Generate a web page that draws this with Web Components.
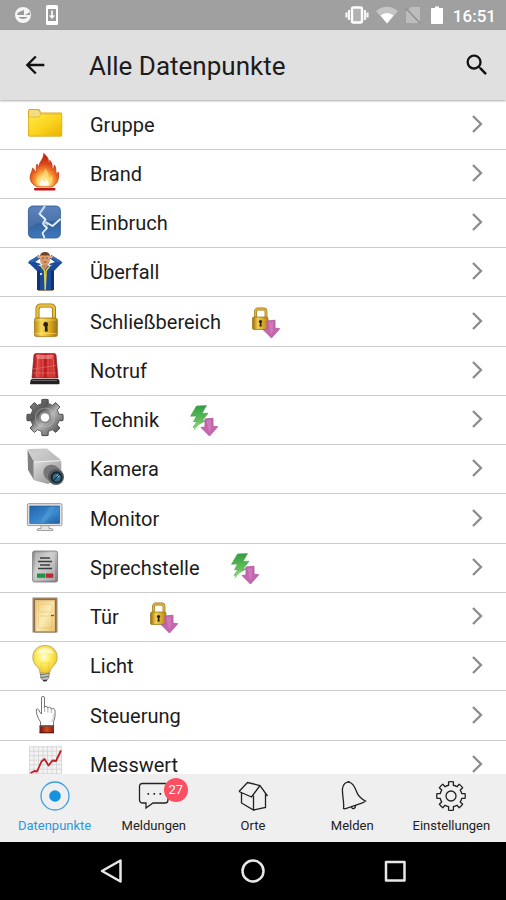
<!DOCTYPE html>
<html lang="de">
<head>
<meta charset="utf-8">
<meta name="viewport" content="width=device-width, initial-scale=1">
<title>Alle Datenpunkte</title>
<style>
  html, body { margin: 0; height: 100%; }
  body { font-family: Roboto, "Liberation Sans", sans-serif; color: #1c1c1c; background: #fff; }
</style>
</head>
<body>
<app-screen>
  <status-bar slot="top" time="16:51"></status-bar>
  <app-header slot="top">Alle Datenpunkte</app-header>
  <point-list>
    <point-row icon="folder">Gruppe</point-row>
    <point-row icon="fire">Brand</point-row>
    <point-row icon="crack">Einbruch</point-row>
    <point-row icon="person">Überfall</point-row>
    <point-row icon="lock" state="lockDown">Schließbereich</point-row>
    <point-row icon="siren">Notruf</point-row>
    <point-row icon="gear" state="boltDown">Technik</point-row>
    <point-row icon="camera">Kamera</point-row>
    <point-row icon="monitor">Monitor</point-row>
    <point-row icon="intercom" state="boltDown">Sprechstelle</point-row>
    <point-row icon="door" state="lockDown">Tür</point-row>
    <point-row icon="bulb">Licht</point-row>
    <point-row icon="hand">Steuerung</point-row>
    <point-row icon="chart">Messwert</point-row>
  </point-list>
  <tab-bar slot="bottom">
    <tab-item icon="target" active>Datenpunkte</tab-item>
    <tab-item icon="chat" badge="27">Meldungen</tab-item>
    <tab-item icon="house">Orte</tab-item>
    <tab-item icon="bell">Melden</tab-item>
    <tab-item icon="cog">Einstellungen</tab-item>
  </tab-bar>
  <system-nav slot="bottom"></system-nav>
</app-screen>

<script>
// Outline of a toothed wheel with n teeth around (cx, cy).
function wheel(cx, cy, n, inner, outer, baseW, tipW) {
  const step = Math.PI * 2 / n;
  const at = (r, a) => (cx + r * Math.sin(a)).toFixed(2) + ' ' + (cy - r * Math.cos(a)).toFixed(2);
  let d = '';
  for (let i = 0; i < n; i++) {
    const a = i * step;
    d += (i ? `A${inner} ${inner} 0 0 1 ` : 'M') + at(inner, a - step * baseW);
    d += 'L' + at(outer, a - step * tipW) + `A${outer} ${outer} 0 0 1 ` + at(outer, a + step * tipW);
    d += 'L' + at(inner, a + step * baseW);
  }
  return d + `A${inner} ${inner} 0 0 1 ` + at(inner, -step * baseW) + 'Z';
}

// Colour pictures on a 40 x 40 canvas.
const pictures = {
  folder: `<defs><linearGradient id="g" x1="0" y1="0" x2="1" y2="1"><stop offset="0" stop-color="#ffe94a"/><stop offset=".5" stop-color="#fbd520"/><stop offset="1" stop-color="#e9b200"/></linearGradient></defs>
    <path d="M3 6q0-2 2-2h8q2 0 2.500 2l.5 1.500h20q1 0 1 1V30q0 1.500-1.500 1.500h-31Q3 31.500 3 30z" fill="#d9a820"/>
    <path d="M4 6.200Q4 5 5.500 5h7q1.500 0 2 1.500l.5 2h20.500V13H4z" fill="#f3dc83"/>
    <path d="M3.500 13q0-1 1-1H14l2.500-3H36q.800 0 .800.800V30q0 1-1 1h-31q-1 0-1-1z" fill="url(#g)" stroke="#e3b719" stroke-width=".8"/>`,
  fire: `<defs><radialGradient id="g" cx=".5" cy=".85" r=".85"><stop offset="0" stop-color="#fffbe0"/><stop offset=".22" stop-color="#ffd968"/><stop offset=".42" stop-color="#f58a2c"/><stop offset=".65" stop-color="#dc4419"/><stop offset="1" stop-color="#ad1c0a"/></radialGradient></defs>
    <path d="M13 33C7 31 4 26 5.500 21c.6-2.500 2-4 2-7 1.800 1.300 2.600 3 2.700 5 2.300-2.500 0-5.500 1.800-9 .5 1.400 1 2 1.800 2.600C14.500 7 19 5 18.700-.5 22 2 24 5 23.500 9c1-.5 1.400-1.500 1.400-2.700 2.600 3.200 2.600 6.200 2 9.700 1.200-.8 2.200-2.500 2.600-5 2 3 .6 5.500 2 8.500 1 1.200 1.500-.5 1.700-1.500 1.300 5.500-.2 12-6.700 15z" fill="url(#g)" stroke="#c23c14" stroke-width=".8"/>
    <path d="M13 31c-3-4-1-7 1-10 .5 1.500 1 2 2 3 1-4 4-6 4-10 4 4 3 7 4 11 1.500-1 2-2.500 2-4 3 4 2 7-1 10z" fill="#ffdf80" opacity=".6"/>
    <path d="M15 31.500c-1-3 1-4 2-6l2.500 3 2-3.500c1 2 3 4 2 6.500z" fill="#fff" opacity=".85"/>
    <rect x="9" y="34" width="21.500" height="2.400" rx=".8" fill="#bf1717"/>`,
  crack: `<defs><linearGradient id="g" x1="0" y1="0" x2="0" y2="1"><stop offset="0" stop-color="#4a76b4"/><stop offset=".55" stop-color="#36629f"/><stop offset="1" stop-color="#3e78bd"/></linearGradient></defs>
    <rect x="3.400" y="3" width="32" height="32" rx="4.500" fill="url(#g)" stroke="#2c5590" stroke-width=".8"/>
    <path d="M4 8q0-4.500 4-4.500h23q4 0 4 4.500v10Q22 16 4 24z" fill="#fff" opacity=".1"/>
    <path d="M20 3l-5.500 8 6 5.500-3 4.500M20.500 19l7 4 8-7M18 21l4 4-4.500 5 2 5" fill="none" stroke="#e9f3fb" stroke-width="1.800" stroke-linejoin="round"/>
    <path d="M17.500 21l3.500-1.500 1.500 3M14 11l5.500-8" fill="none" stroke="#b8d2ec" stroke-width="1.500"/>`,
  person: `<path d="M14 13.500L3.300 11.500 4 9l10-5.500 2 2.500-6 4 6 2zM25.500 13.500l11.200-2L36 9 26 3.500 24 6l6 4-6 2z" fill="#1f4f9d"/>
    <path d="M3.300 10.500L12 19v19h17V19l8.300-8.500L34 8l-8 6H14L7 8z" fill="#1b4c9c"/>
    <path d="M4 9.500L13.500 3l1.500 2-8 5.500zM36.500 9.500L26.500 3 25 5l8 5.500z" fill="#3368b4"/>
    <path d="M12 19v19h3V18zM26 18v20h3V19z" fill="#12336f"/>
    <ellipse cx="20" cy="7.500" rx="5" ry="6.500" fill="#d79b6e"/><path d="M15 5q0-5 5-5t5 5l-2-1.500h-6z" fill="#6f4226"/>
    <path d="M12 4l6-.500 1 1.700-6 1.300zM28 4l-6-.500-1 1.700 6 1.300z" fill="#e0a77b"/><path d="M17 6h2m2 0h2m-4.500 4h3" stroke="#7b4a31" stroke-width=".9"/>
    <path d="M16 13l4 5 4-5" fill="#c58860"/><path d="M15.500 13.500l4 5 .7 19.500 1-19.500 4-5" fill="none" stroke="#e4d43f" stroke-width="1.300"/><rect x="15" y="21" width="2" height="2" fill="#cfe1f5"/>
    <path d="M13 38.400h15" stroke="#4f3f20" stroke-width=".7"/>`,
  lock: `<defs><linearGradient id="g"><stop offset="0" stop-color="#b88910"/><stop offset=".3" stop-color="#f6d75c"/><stop offset=".65" stop-color="#e0ae20"/><stop offset="1" stop-color="#9f7210"/></linearGradient></defs>
    <path d="M12.500 17V7q0-3.500 3.500-3.500h9.500q3.500 0 3.500 3.500v10" fill="none" stroke="#9a740f" stroke-width="4"/>
    <path d="M12.500 17V7q0-3.500 3.500-3.500h9.500q3.500 0 3.500 3.500v10" fill="none" stroke="#e8c141" stroke-width="2.400"/>
    <rect x="9.400" y="16" width="23" height="18.600" rx="2" fill="url(#g)" stroke="#a07b18" stroke-width=".8"/><path d="M10 18h21.500M10 31.500h21.500" stroke="#fff1a0" stroke-width=".8" opacity=".6"/>
    <circle cx="20.700" cy="22.500" r="2.400" fill="#2b2008"/><path d="M20 23h2.200l.6 6.500h-3z" fill="#2b2008"/>`,
  siren: `<defs><linearGradient id="g"><stop offset="0" stop-color="#8f1218"/><stop offset=".25" stop-color="#e04444"/><stop offset=".5" stop-color="#b51a1f"/><stop offset=".75" stop-color="#dc3b3a"/><stop offset="1" stop-color="#84131a"/></linearGradient></defs>
    <path d="M9 4q.3-1.500 2-1.500h18q1.700 0 2 1.500l2 23H7z" fill="url(#g)" stroke="#8b262c" stroke-width=".7"/>
    <path d="M13 4l-1.500 22M18 4v22M23 4v22M28 4l1.500 22" stroke="#ff9380" stroke-width=".8" opacity=".65"/><path d="M8 18l23-3.500M8 22h23" stroke="#f17d61" stroke-width="1" opacity=".55"/>
    <path d="M11 4h17l-1 4H12z" fill="#ffc2b8" opacity=".45"/><path d="M5.500 30q0-2 2-2h25q2 0 2 2v2.500q0 .8-.8.800H5.800q-.8 0-.8-.8z" fill="#242021"/><path d="M7 29.500h25" stroke="#777" stroke-width=".8"/>`,
  gear: `<defs><linearGradient id="g" x1="0" y1="0" x2="1" y2="1"><stop offset="0" stop-color="#909090"/><stop offset=".35" stop-color="#555"/><stop offset=".55" stop-color="#b5b5b5"/><stop offset="1" stop-color="#333"/></linearGradient></defs>
    <path d="${wheel(20, 17.5, 8, 14.2, 18.2, .3, .22)}" fill="url(#g)" stroke="#444" stroke-width=".9" stroke-linejoin="round"/>
    <circle cx="20" cy="17.500" r="9.500" fill="none" stroke="#d0d0d0" stroke-width="1.200" opacity=".4"/><circle cx="20" cy="17.500" r="6" fill="#8a8a8a"/><circle cx="20" cy="17.500" r="4.600" fill="#fff" stroke="#6e6e6e" stroke-width=".6"/>`,
  camera: `<defs><linearGradient id="g" x1="0" y1="0" x2="1" y2="1"><stop offset="0" stop-color="#dedede"/><stop offset="1" stop-color="#8b8b8b"/></linearGradient></defs>
    <path d="M2.500 1L9 12.500V31L3 21z" fill="#808080"/><path d="M2.500 1Q3 0 4.500 0L22-.500 36 11 9 12.500z" fill="#c9c9c9"/>
    <path d="M3 1l6 11.500V31L20 34l16-7V11.500L24 2 8 4z" fill="url(#g)" opacity=".55"/>
    <path d="M8.500 13L35 11.500q1.300 0 1.300 1.500v15L23 35 10 31.500q-1.500-.5-1.500-2z" fill="url(#g)"/><path d="M9 13l26.500-1.300" stroke="#f2f2f2" stroke-width=".9"/>
    <ellipse cx="27" cy="24" rx="9" ry="8" fill="#777" transform="rotate(30 27 24)"/><circle cx="31" cy="28" r="8" fill="#555b5f"/><circle cx="31.500" cy="28.300" r="6" fill="#20282d"/><circle cx="31.800" cy="28.500" r="4" fill="#326b88"/><circle cx="33" cy="27" r="1.500" fill="#93c7dd"/><path d="M28 32l7-7" stroke="#101518" stroke-width="1"/>`,
  monitor: `<defs><linearGradient id="g" x1="0" y1="0" x2="1" y2="1"><stop offset="0" stop-color="#2163ae"/><stop offset=".6" stop-color="#3b8bd0"/><stop offset="1" stop-color="#215f9f"/></linearGradient></defs>
    <path d="M16 26h8v3.500h2.500q1.500 0 1.500 2H12q0-2 1.500-2H16z" fill="#e4e4e4" stroke="#8d8d8d" stroke-width=".8"/>
    <rect x="2.400" y="4.600" width="34.600" height="22" rx="1.500" fill="#e0e0e0" stroke="#949494" stroke-width=".9"/><rect x="4.800" y="7" width="29.800" height="17.400" fill="url(#g)" stroke="#245488" stroke-width=".6"/>
    <path d="M15 24L24.500 7.500h6L20 24z" fill="#8cc6ef" opacity=".2"/>`,
  intercom: `<defs><linearGradient id="g" x1="0" y1="0" x2="1" y2="1"><stop offset="0" stop-color="#858585"/><stop offset=".4" stop-color="#c9c9c9"/><stop offset="1" stop-color="#7c7c7c"/></linearGradient></defs>
    <rect x="7.600" y="3" width="25" height="31" rx="1.800" fill="url(#g)" stroke="#777" stroke-width=".8"/><rect x="10" y="4.500" width="20" height="28" fill="#ddd" opacity=".4"/>
    <path d="M15 10h10M13 13.500h14M15 17h10M13 20.500h14" stroke="#3c3c3c" stroke-width="1.500"/><rect x="12" y="25.500" width="8" height="4.300" fill="#219347"/><rect x="20.700" y="25.500" width="7.600" height="4.300" fill="#bf2732"/>`,
  door: `<defs><linearGradient id="g" x1="0" y1="0" x2="1" y2="1"><stop offset="0" stop-color="#f1cf7e"/><stop offset=".5" stop-color="#fbecb5"/><stop offset="1" stop-color="#eac36d"/></linearGradient></defs>
    <path d="M7.500.500h25V35.500h-25z" fill="#a08263"/><path d="M9.500 2.500h21V35h-21z" fill="#e6c27d" stroke="#7d6046" stroke-width=".8"/><path d="M11.500 4.500H29V34H11.500z" fill="url(#g)"/>
    <path d="M13.500 7H27v8H13.500zM13.500 19H27v12H13.500z" fill="none" stroke="#d9aa55" stroke-width=".8" opacity=".45"/><path d="M26 18.500h3" stroke="#7a5725" stroke-width="1.400"/>`,
  bulb: `<defs><radialGradient id="g" cx=".45" cy=".4" r=".6"><stop offset="0" stop-color="#fffde2"/><stop offset=".4" stop-color="#fff16b"/><stop offset="1" stop-color="#f0c722"/></radialGradient></defs>
    <path d="M15 25.500h9.500l-.7 6q-.6 2-2.500 3-1.500 1.200-3 0-2-1-2.500-3z" fill="#c5c5c5" stroke="#777" stroke-width=".8"/><path d="M15.500 28.500l8.500-1M15.800 31.500l8-1" stroke="#666" stroke-width="1"/><path d="M18 34.500h4" stroke="#333" stroke-width="1.500"/>
    <path d="M15 26.500c0-6-7.200-7-7.200-15C7.800 4 13.300-.5 20-.5s12.200 4.500 12.200 12c0 8-7.200 9-7.200 15q-5 1.500-10 0z" fill="url(#g)" stroke="#b9a660" stroke-width=".9"/>
    <path d="M11 8q2-6 9-6t9 6q-9-3-18 0z" fill="#fff" opacity=".6"/><path d="M17 25l-1-9 2.500 2 1.500-2 1.500 2 2.500-2-1 9" fill="none" stroke="#d9a72b" stroke-width=".7" opacity=".4"/>`,
  hand: `<defs><linearGradient id="g"><stop offset="0" stop-color="#70150c"/><stop offset=".5" stop-color="#d84823"/><stop offset="1" stop-color="#8c1e0e"/></linearGradient></defs>
    <path d="M16.500 18V2q0-1.700 1.400-1.700T19.500 2v9.500q.3-1.400 1.700-1.200 1.500.2 1.600 1.700.6-1 1.900-.8 1.400.3 1.500 1.800.8-.8 2-.5 1.800.6 1.900 2.500.6 6-1.600 11v4H15.500v-4q-2-3-3.500-7l-.8-5q.2-1.500 1.500-1 1.500.7 2 3z" fill="#fff" stroke="#666" stroke-width=".9" stroke-linejoin="round"/>
    <path d="M19.600 11v5M22.900 12v4.500M26.300 13v4" stroke="#888" stroke-width=".7"/><path d="M28.500 18q.3 5-2 8" fill="none" stroke="#ccc"/>
    <path d="M14.500 30.500h14.500v6.500H14.500z" fill="url(#g)"/><path d="M14.300 30h14.900M14.500 36.800h14.500" stroke="#4a100a" stroke-width="1"/>`,
  chart: `<rect x="4.300" y="1.500" width="32.400" height="32.500" fill="#f3f3f3"/><path d="M4.500 1.500V34M9 1.500V34M13.500 1.500V34M18 1.500V34M22.500 1.500V34M27 1.500V34M31.500 1.500V34M36.500 1.500V34M4.300 1.700h32.400M4.300 6.200h32.400M4.300 10.700h32.400M4.300 15.200h32.400M4.300 19.700h32.400M4.300 24.200h32.400M4.300 28.700h32.400" stroke="#d2d2d2" stroke-width=".8"/>
    <path d="M5.500 28l4-2 2.500.5 4.500-10 3-2.500 4 6.500 4-5 3.500.5L36 5.500" fill="none" stroke="#bd1f2a" stroke-width="1.800" stroke-linejoin="round"/>`
};

// Small state pictures on a 28 x 32 canvas; both carry the download arrow.
const arrow = `<path d="M15 15l8-.800v8l4.700.5L19.500 32l-8.500-8.500 4-.5z" fill="#c766ae" stroke="#a9559a" stroke-width=".8" stroke-linejoin="round"/><path d="M16.500 16.500l4.500-.5v9l-2 3.500z" fill="#dc93cb" opacity=".4"/>`;
const states = {
  lockDown: `<defs><linearGradient id="s"><stop offset="0" stop-color="#9a6e0c"/><stop offset=".35" stop-color="#f3cf50"/><stop offset="1" stop-color="#b88416"/></linearGradient></defs>
    <path d="M3.500 12V5.500Q3.500 3 6 3h5.500Q14 3 14 5.500V12" fill="none" stroke="#9b7513" stroke-width="2.800"/><path d="M3.500 12V5.500Q3.500 3 6 3h5.500Q14 3 14 5.500V12" fill="none" stroke="#dfb742" stroke-width="1.500"/>
    <rect x=".5" y="11" width="15.500" height="12.500" rx="1.500" fill="url(#s)" stroke="#98710f" stroke-width=".7"/><circle cx="8.500" cy="15.500" r="1.600" fill="#2b2008"/><path d="M8 15.500h1.200l.5 5H7.500z" fill="#2b2008"/>${arrow}`,
  boltDown: `<defs><linearGradient id="s" x1="0" y1="0" x2="0" y2="1"><stop offset="0" stop-color="#2f9d41"/><stop offset="1" stop-color="#7ccf68"/></linearGradient></defs>
    <path d="M6.500 2L16.500 1.500 12 9.500l6-.3-6 7.800 3.500-.3L3 23.500l4-6-3.500.3L6.500 12 .500 12.200z" fill="url(#s)" stroke="#43a04a" stroke-width=".6" stroke-linejoin="round"/><path d="M5.500 19l-2 8 7-9z" fill="#7ccf68"/>${arrow}`
};

// Line drawings for the tab bar on a 30 x 30 canvas.
const tabs = {
  target: `<circle cx="15" cy="15" r="14" stroke="#3ba0e0"/><circle cx="15" cy="15" r="5.800" fill="#1592e0" stroke="none"/>`,
  chat: `<path d="M3.500 2.500H26Q29 2.500 29 5.500V19Q29 22 26 22H14L7 27V22H4Q.500 22 .500 19V5.500Q.500 2.500 3.500 2.500z"/><path d="M8.500 12.800h1.600M14.500 12.800h1.600M20.500 12.800h1.600" stroke-width="1.700"/>`,
  house: `<path d="M1 10.500L9.500 1.500 22 4.500 29.500 15M1 10.500L13.500 16 22 4.500M3.500 12V22L15.500 29V14.500M15.500 29L27.500 26.500V12.500"/>`,
  bell: `<path d="M6.500 27.500C7.500 22 5 14 5.500 7.500 6 3 9 .8 12 1.200c3.500.6 5.500 4 7.500 9.300 1.500 4.500 4 7 9 9.500L25.500 21.800 8 27.800zM14.500 26c.8 2.800 4.200 1.700 4-1.200"/><path d="M10.500 1.500q.5-1.500 2-.4" />`,
  cog: `<path d="${wheel(15, 15, 8, 11, 14.3, .27, .22)}" stroke-linejoin="round"/><circle cx="15" cy="15" r="5"/>`
};

function define(name, render) {
  customElements.define(name, class extends HTMLElement {
    constructor() {
      super();
      const root = this.attachShadow({ mode: 'open' });
      const tpl = document.createElement('template');
      tpl.innerHTML = render(this);
      root.append(tpl.content.cloneNode(true));
    }
  });
}

define('app-screen', () => `
  <style>
    :host { display: flex; flex-direction: column; height: 100vh; }
    main { flex: 1; min-height: 0; overflow-y: auto; scrollbar-width: none; }
    .top { position: relative; }
  </style>
  <div class="top"><slot name="top"></slot></div>
  <main><slot></slot></main>
  <div><slot name="bottom"></slot></div>`);

define('status-bar', el => `
  <style>
    :host { display: flex; align-items: center; justify-content: space-between; height: 30px; padding: 0 10px 0 14px; background: #a0a0a0; color: #fff; }
    div { display: flex; align-items: center; gap: 7px; }
    .left { gap: 13px; }
    time { font-size: 17px; line-height: 30px; font-weight: 500; padding-top: 2px; }
    svg { display: block; }
  </style>
  <div class="left">
    <svg width="18" height="20" viewBox="0 0 18 20"><circle cx="9" cy="10" r="8" fill="#f5f5f5"/><path d="M4 7.500L10 5v5H3zM11 10l5-3v3zM4.500 12h9q-1.500 2-4.500 2t-4.500-2z" fill="#999"/></svg>
    <svg width="14" height="20" viewBox="0 0 14 20"><rect x="1" y="0" width="12" height="20" rx="1.500" fill="#fff"/><path d="M3 4h8v12H3z" fill="#999"/><path d="M6.200 5.500h1.600v5h2.400L7 14 3.800 10.500h2.400z" fill="#fff"/></svg>
  </div>
  <div>
    <svg width="24" height="20" viewBox="0 0 24 20"><rect x="7" y="2.500" width="10" height="15" rx="1.500" fill="#b2b2b2" stroke="#fff" stroke-width="2.400"/><path d="M4 5v10M20 5v10M1.500 7.500v5M22.500 7.500v5" stroke="#f4f4f4" stroke-width="2.200"/></svg>
    <svg width="22" height="20" viewBox="0 0 22 20"><path d="M0 6Q11-2.500 22 6L11 18.500z" fill="#c5c5c5"/><path d="M4.500 10.500q6.500-5 13 0L11 18.500z" fill="#fff"/></svg>
    <svg width="16" height="20" viewBox="0 0 16 20"><path d="M6 2h9v16H1V7z" fill="#bcbcbc"/><path d="M0 2.500l15.500 16" stroke="#8f8f8f" stroke-width="1.500"/></svg>
    <svg width="18" height="20" viewBox="0 0 18 20"><path d="M4 3h3V1.500h4V3h3q1 0 1 1v14q0 1-1 1H4q-1 0-1-1V4q0-1 1-1z" fill="#fff"/></svg>
    <time>${el.getAttribute('time')}</time>
  </div>`);

define('app-header', () => `
  <style>
    :host { display: block; background: #e0e0e0; box-shadow: 0 1px 2px #0005; }
    header { display: flex; align-items: center; height: 70px; padding: 0 15px 0 21px; }
    h1 { flex: 1; margin: 0 0 0 40px; padding-top: 2px; font-size: 26px; line-height: 32px; font-weight: 400; color: #1c1c1c; }
    button { display: block; padding: 0; border: 0; background: none; }
    svg { display: block; fill: #111; }
  </style>
  <header>
    <button aria-label="Zurück"><svg width="28" height="28" viewBox="0 0 24 24"><path d="M20 11H7.830l5.590-5.590L12 4l-8 8 8 8 1.410-1.410L7.830 13H20z"/></svg></button>
    <h1><slot></slot></h1>
    <button aria-label="Suchen"><svg width="28" height="28" viewBox="0 0 24 24"><path d="M15.500 14h-.79l-.28-.27A6.470 6.470 0 0 0 16 9.500 6.500 6.500 0 1 0 9.500 16c1.610 0 3.090-.59 4.230-1.570l.27.28v.79l5 4.990L20.490 19zm-6 0C7.010 14 5 11.990 5 9.500S7.010 5 9.500 5 14 7.010 14 9.500 11.990 14 9.500 14z"/></svg></button>
  </header>`);

define('point-list', () => `
  <style>
    :host { display: grid; grid-auto-rows: 50px 49px 49px 49px; }
  </style>
  <slot></slot>`);

define('point-row', el => `
  <style>
    :host { display: grid; border-bottom: 1px solid #ccc; }
    button { display: flex; align-items: center; width: 100%; padding: 0 24px 0 25px; border: 0; background: none; font: inherit; color: inherit; text-align: left; }
    .picture { flex: none; margin-right: 25px; }
    .label { font-size: 20px; line-height: 24px; font-weight: 400; }
    .state { flex: none; margin-left: 31px; }
    .go { flex: none; margin-left: auto; padding-bottom: 2px; }
    svg { display: block; overflow: visible; }
  </style>
  <button>
    <svg class="picture" width="40" height="40" viewBox="0 0 40 40" aria-hidden="true">${pictures[el.getAttribute('icon')]}</svg>
    <span class="label"><slot></slot></span>
    ${el.hasAttribute('state') ? `<svg class="state" width="28" height="32" viewBox="0 0 28 32" aria-hidden="true">${states[el.getAttribute('state')]}</svg>` : ''}
    <svg class="go" width="10" height="18" viewBox="0 0 10 18" aria-hidden="true"><path d="M1 1l8 8-8 8" fill="none" stroke="#8c8c8c" stroke-width="2.300"/></svg>
  </button>`);

define('tab-bar', () => `
  <style>
    :host { display: block; position: relative; background: #efefef; }
    nav { display: grid; grid-template-columns: repeat(5, 1fr); height: 68px; padding: 0 5px; }
  </style>
  <nav><slot></slot></nav>`);

define('tab-item', el => `
  <style>
    :host { display: block; min-width: 0; color: #222; }
    :host([active]) { color: #2b98dc; }
    a { position: relative; display: flex; flex-direction: column; align-items: center; gap: 7px; padding-top: 7px; color: inherit; text-decoration: none; font-size: 13px; line-height: 16px; }
    svg { display: block; fill: none; stroke: #222; stroke-width: 1.300; overflow: visible; }
    .badge { position: absolute; top: 4px; left: 50%; margin-left: 10px; width: 24px; height: 24px; border-radius: 50%; background: #fa5061; color: #fff; font-size: 13px; line-height: 24px; text-align: center; }
  </style>
  <a href="#${el.getAttribute('icon')}">
    <svg width="30" height="30" viewBox="0 0 30 30" aria-hidden="true">${tabs[el.getAttribute('icon')]}</svg>
    <span><slot></slot></span>
    ${el.hasAttribute('badge') ? `<span class="badge">${el.getAttribute('badge')}</span>` : ''}
  </a>`);

define('system-nav', () => `
  <style>
    :host { display: grid; grid-template-columns: repeat(3, 1fr); align-items: center; height: 58px; padding: 0 40px; background: #000; }
    button { display: grid; place-items: center; padding: 0; border: 0; background: none; }
    svg { display: block; fill: none; stroke: #e8e8e8; stroke-width: 2.500; stroke-linejoin: round; }
  </style>
  <button aria-label="Zurück"><svg width="26" height="26" viewBox="0 0 26 26"><path d="M22.500 2.500v21L4 13z"/></svg></button>
  <button aria-label="Startseite"><svg width="26" height="26" viewBox="0 0 26 26"><circle cx="13" cy="13" r="10.500"/></svg></button>
  <button aria-label="Übersicht"><svg width="26" height="26" viewBox="0 0 26 26"><path d="M4 4h18.500v18.500H4z"/></svg></button>`);
</script>
</body>
</html>
